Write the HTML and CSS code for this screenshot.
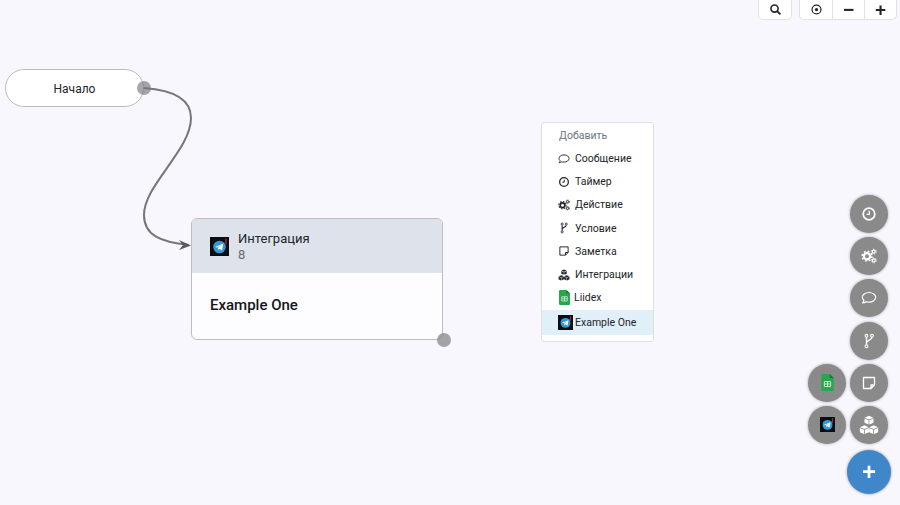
FILE: index.html
```html
<!DOCTYPE html>
<html lang="ru">
<head>
    <meta charset="UTF-8">
    <meta name="viewport" content="width=device-width, initial-scale=1.0">
    <title>Сценарий</title>
    <link rel="stylesheet" href="styles.css">
</head>
<body>
    <svg width="0" height="0" class="defs">
        <symbol id="tg" viewBox="0 0 20 20">
            <rect width="20" height="20" fill="#0b0d12"/>
            <path d="M16 1.500h1.500v6H16z" fill="#a3232e"/>
            <circle cx="10" cy="10.500" r="6.600" fill="#2f9ad6"/>
            <path d="M5.400 10.400l8.600-3.500-1.400 7.400-2.600-1.900-1.300 1.300-.3-2.300 3.700-3-4.700 2.700z" fill="#fff"/>
        </symbol>
        <symbol id="sheet" viewBox="0 0 14 19">
            <path d="M1.500 0H9.500L14 4.500V17.500A1.500 1.500 0 0 1 12.500 19H1.500A1.500 1.500 0 0 1 0 17.500V1.500A1.500 1.500 0 0 1 1.500 0Z" fill="#27a84f"/>
            <path d="M9.500 0L14 4.500H9.500Z" fill="#157a36"/>
            <path d="M3.500 8.500H10.500V14H3.500ZM3.500 11.200H10.500M7 8.500V14" fill="none" stroke="#d6efdc" stroke-width="1"/>
        </symbol>
        <symbol id="comment" viewBox="0 0 16 16">
            <path d="M8 2.500C4.300 2.500 1.300 4.600 1.300 7.300C1.300 8.500 1.900 9.500 2.900 10.300C2.700 11.300 2.100 12.300 1.500 13C2.900 12.900 4.200 12.400 5.100 11.700C6 12 7 12.100 8 12.100C11.700 12.100 14.700 10 14.700 7.300C14.700 4.600 11.700 2.500 8 2.500Z" fill="none" stroke="currentColor" stroke-width="1.200" stroke-linejoin="round"/>
        </symbol>
        <symbol id="clock" viewBox="0 0 16 16">
            <circle cx="8" cy="8" r="5.800" fill="none" stroke="currentColor" stroke-width="1.700"/>
            <path d="M8.300 4.800V8.300H5.700" fill="none" stroke="currentColor" stroke-width="1.300"/>
        </symbol>
        <symbol id="gears" viewBox="0 0 16 16">
            <circle cx="6" cy="8.200" r="3.100" fill="none" stroke="currentColor" stroke-width="2.200"/>
            <circle cx="6" cy="8.200" r="4.900" fill="none" stroke="currentColor" stroke-width="1.500" stroke-dasharray="1.900 1.950"/>
            <circle cx="12.800" cy="3.700" r="1.500" fill="none" stroke="currentColor" stroke-width="1.200"/>
            <circle cx="12.800" cy="3.700" r="2.500" fill="none" stroke="currentColor" stroke-width="0.900" stroke-dasharray="1.300 1.320"/>
            <circle cx="12.800" cy="12.400" r="1.500" fill="none" stroke="currentColor" stroke-width="1.200"/>
            <circle cx="12.800" cy="12.400" r="2.500" fill="none" stroke="currentColor" stroke-width="0.900" stroke-dasharray="1.300 1.320"/>
        </symbol>
        <symbol id="fork" viewBox="0 0 16 16">
            <circle cx="5.500" cy="2.800" r="1.400" fill="none" stroke="currentColor" stroke-width="1.100"/>
            <circle cx="11" cy="2.800" r="1.400" fill="none" stroke="currentColor" stroke-width="1.100"/>
            <circle cx="5.500" cy="13.200" r="1.400" fill="none" stroke="currentColor" stroke-width="1.100"/>
            <path d="M5.500 4.200V11.800M11 4.200C11 7.200 5.500 7 5.500 10" fill="none" stroke="currentColor" stroke-width="1.400"/>
        </symbol>
        <symbol id="note" viewBox="0 0 16 16">
            <path d="M2.500 2.500H13.500V10L10 13.500H2.500ZM13.500 10H10V13.500" fill="none" stroke="currentColor" stroke-width="1.300" stroke-linejoin="round"/>
        </symbol>
        <symbol id="cubes" viewBox="0 0 16 16">
            <g id="cube" fill="currentColor">
                <path d="M8 .6L11.500 2.100L8 3.600L4.500 2.100Z"/>
                <path d="M4.400 2.800L7.700 4.200V7.600L4.400 6.200Z"/>
                <path d="M11.600 2.800L8.300 4.200V7.600L11.600 6.200Z"/>
            </g>
            <use href="#cube" x="-3.700" y="7.600"/>
            <use href="#cube" x="3.700" y="7.600"/>
        </symbol>
        <symbol id="search" viewBox="0 0 16 16">
            <circle cx="6.800" cy="6.800" r="4.400" fill="none" stroke="currentColor" stroke-width="2"/>
            <path d="M10 10L14 14" stroke="currentColor" stroke-width="2.400"/>
        </symbol>
        <symbol id="target" viewBox="0 0 16 16">
            <circle cx="8" cy="8" r="5.500" fill="none" stroke="currentColor" stroke-width="1.500"/>
            <circle cx="8" cy="8" r="2" fill="currentColor"/>
        </symbol>
    </svg>

    <!-- Canvas -->
    <div class="canvas">
        <svg class="links" width="900" height="505">
            <path d="M144 88C172 90 191 98 191 118C191 150 144 185 144 215C144 235 160 242 189 245" fill="none" stroke="#77757b" stroke-width="2"/>
            <path d="M191 245.500L179 240L183 245L179 250Z" fill="#5c5b60"/>
        </svg>

        <div class="start-node">Начало</div>
        <div class="handle start-handle"></div>

        <div class="node">
            <div class="node-header">
                <svg class="node-icon"><use href="#tg"/></svg>
                <div>
                    <div class="node-type">Интеграция</div>
                    <div class="node-id">8</div>
                </div>
            </div>
            <div class="node-body">Example One</div>
        </div>
        <div class="handle node-handle"></div>

        <div class="menu">
            <div class="menu-title">Добавить</div>
            <div class="menu-item"><svg class="menu-icon"><use href="#comment"/></svg>Сообщение</div>
            <div class="menu-item"><svg class="menu-icon"><use href="#clock"/></svg>Таймер</div>
            <div class="menu-item"><svg class="menu-icon"><use href="#gears"/></svg>Действие</div>
            <div class="menu-item"><svg class="menu-icon"><use href="#fork"/></svg>Условие</div>
            <div class="menu-item"><svg class="menu-icon"><use href="#note"/></svg>Заметка</div>
            <div class="menu-item"><svg class="menu-icon"><use href="#cubes"/></svg>Интеграции</div>
            <div class="menu-item sheet-item"><svg class="sheet-icon"><use href="#sheet"/></svg>Liidex</div>
            <div class="menu-item active"><svg class="tg-icon"><use href="#tg"/></svg>Example One</div>
        </div>
    </div>

    <!-- Toolbar -->
    <div class="toolbar">
        <div class="tool-group">
            <button class="tool"><svg><use href="#search"/></svg></button>
        </div>
        <div class="tool-group">
            <button class="tool"><svg><use href="#target"/></svg></button>
            <button class="tool sign">−</button>
            <button class="tool sign">+</button>
        </div>
    </div>

    <!-- Quick add buttons -->
    <div class="fabs">
        <div class="fab slot-right"><svg><use href="#clock"/></svg></div>
        <div class="fab slot-right"><svg><use href="#gears"/></svg></div>
        <div class="fab slot-right"><svg><use href="#comment"/></svg></div>
        <div class="fab slot-right"><svg><use href="#fork"/></svg></div>
        <div class="fab"><svg class="fab-sheet"><use href="#sheet"/></svg></div>
        <div class="fab"><svg><use href="#note"/></svg></div>
        <div class="fab"><svg class="fab-tg"><use href="#tg"/></svg></div>
        <div class="fab"><svg class="fab-cubes"><use href="#cubes"/></svg></div>
        <div class="fab-main slot-right">+</div>
    </div>
</body>
</html>
```

FILE: styles.css
```css
html, body {
    margin: 0;
    padding: 0;
    height: 100%;
}

body {
    font-family: 'Roboto', 'Open Sans', sans-serif;
    background-color: #f9f7fe;
    color: #212529;
    overflow: hidden;
}

.defs {
    position: absolute;
}

.canvas {
    position: relative;
    width: 900px;
    height: 505px;
}

.links {
    position: absolute;
    top: 0;
    left: 0;
}

/* Nodes */
.start-node {
    position: absolute;
    left: 5px;
    top: 69px;
    width: 139px;
    height: 38px;
    box-sizing: border-box;
    padding-top: 1px;
    display: flex;
    align-items: center;
    justify-content: center;
    background-color: #fff;
    border: 1px solid #bdbbc0;
    border-radius: 19px;
    font-size: 12px;
}

.handle {
    position: absolute;
    width: 14px;
    height: 14px;
    border-radius: 50%;
    background-color: rgba(120, 118, 125, 0.65);
}

.start-handle {
    left: 137px;
    top: 81px;
}

.node-handle {
    left: 437px;
    top: 333px;
}

.node {
    position: absolute;
    left: 191px;
    top: 218px;
    width: 252px;
    height: 122px;
    box-sizing: border-box;
    background-color: #fdfcff;
    border: 1px solid #bdbcc1;
    border-radius: 6px;
}

.node-header {
    display: flex;
    align-items: center;
    gap: 9px;
    height: 54px;
    padding-left: 18px;
    background-color: #dee2ea;
    border-radius: 5px 5px 0 0;
}

.node-icon {
    width: 19px;
    height: 19px;
}

.node-type {
    font-size: 13px;
    line-height: 17px;
}

.node-id {
    font-size: 13px;
    line-height: 16px;
    color: #6a6a6e;
}

.node-body {
    padding: 22px 18px;
    font-size: 15px;
    line-height: 20px;
    font-weight: 500;
    color: #14161a;
}

/* Add menu */
.menu {
    position: absolute;
    left: 541px;
    top: 122px;
    width: 113px;
    height: 220px;
    box-sizing: border-box;
    background-color: #fff;
    border: 1px solid #dfdee3;
    border-radius: 3px;
    padding-top: 2px;
    font-size: 10.500px;
    color: #212529;
}

.menu-title {
    height: 22px;
    line-height: 22px;
    padding-left: 17px;
    color: #6c757d;
}

.menu-item {
    display: flex;
    align-items: center;
    height: 23.200px;
    padding-left: 16px;
}

.menu-icon {
    width: 12px;
    height: 12px;
    margin-right: 5px;
    color: #212529;
}

.sheet-item {
    padding-left: 17px;
}

.sheet-icon {
    width: 11px;
    height: 15px;
    margin-right: 4px;
}

.tg-icon {
    width: 15px;
    height: 15px;
    margin-right: 2px;
}

.menu-item.active {
    height: 25px;
    margin-top: 1px;
    background-color: #e1eff8;
}

/* Toolbar */
.toolbar {
    position: fixed;
    top: 0;
    right: 3px;
    display: flex;
    gap: 7px;
}

.tool-group {
    display: flex;
    background-color: #fff;
    border: 1px solid #e2e1e6;
    border-top: none;
    border-radius: 0 0 5px 5px;
    height: 19px;
}

.tool {
    width: 32px;
    height: 19px;
    padding: 0;
    display: flex;
    align-items: center;
    justify-content: center;
    background: none;
    border: none;
    border-left: 1px solid #e2e1e6;
    color: #212529;
}

.tool:first-child {
    border-left: none;
}

.tool svg {
    width: 13px;
    height: 13px;
}

.sign {
    font-family: 'Liberation Sans', sans-serif;
    font-size: 19px;
    font-weight: 700;
    line-height: 19px;
}

/* Quick add buttons */
.fabs {
    position: fixed;
    top: 195px;
    right: 12px;
    display: grid;
    grid-template-columns: 38px 38px;
    grid-auto-rows: 38px;
    gap: 4.200px 4px;
}

.fab {
    display: flex;
    align-items: center;
    justify-content: center;
    border-radius: 50%;
    background-color: #8a8a8a;
    box-shadow: 0 0 3px rgba(0, 0, 0, 0.35);
    color: #fff;
}

.fab svg {
    width: 16px;
    height: 16px;
}

.fab .fab-sheet {
    width: 13px;
    height: 17px;
}

.fab .fab-tg {
    width: 15px;
    height: 15px;
}

.fab .fab-cubes {
    width: 20px;
    height: 20px;
}

.slot-right {
    grid-column: 2;
}

.fab-main {
    display: flex;
    align-items: center;
    justify-content: center;
    width: 44px;
    height: 44px;
    margin: 2px 0 0 -3px;
    border-radius: 50%;
    background-color: #3f87c9;
    box-shadow: 0 0 3px rgba(0, 0, 0, 0.4);
    color: #fff;
    font-family: 'Liberation Sans', sans-serif;
    font-size: 24px;
    font-weight: 700;
}
```
